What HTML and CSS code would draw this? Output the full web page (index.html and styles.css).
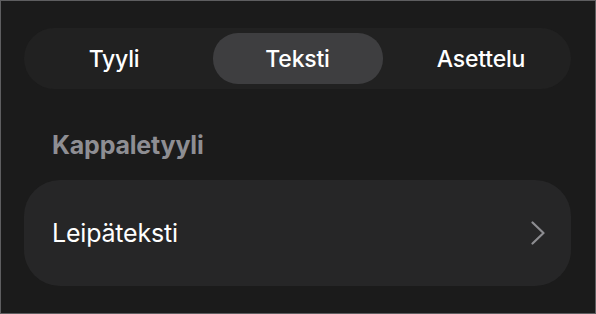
FILE: index.html
```html
<!DOCTYPE html>
<html lang="fi">
<head>
<meta charset="utf-8">
<title>Kappaletyyli</title>
<link rel="stylesheet" href="styles.css">
</head>
<body>
<div class="frame">
  <div class="segmented">
    <div class="seg">Tyyli</div>
    <div class="seg seg-active">Teksti</div>
    <div class="seg">Asettelu</div>
  </div>
  <div class="section-title">Kappaletyyli</div>
  <div class="card">
    <span class="card-label">Leipäteksti</span>
    <svg class="chevron" width="14" height="24" viewBox="0 0 14 24" aria-hidden="true">
      <path d="M1.5 1.5 L12.5 12 L1.5 22.5" fill="none" stroke="#8d8d91" stroke-width="2.2" stroke-linecap="round" stroke-linejoin="round"/>
    </svg>
  </div>
</div>
</body>
</html>
```
FILE: styles.css
```css
html, body {
  margin: 0;
  padding: 0;
  background: #1b1b1b;
}
.frame {
  width: 596px;
  height: 314px;
  box-sizing: border-box;
  border: 1px solid #5e5e60;
  padding: 27px 0 0 23px;
  font-family: Inter, "Noto Sans", "Liberation Sans", sans-serif;
  color: #ffffff;
}
.segmented {
  width: 547px;
  height: 61px;
  box-sizing: border-box;
  padding: 5px;
  border-radius: 31px;
  background: #212121;
  display: flex;
  justify-content: space-between;
}
.seg {
  width: 170px;
  display: flex;
  align-items: center;
  justify-content: center;
  font-size: 23px;
  font-weight: 500;
  letter-spacing: -0.2px;
  border-radius: 25px;
}
.seg-active {
  background: #3e3e40;
}
.section-title {
  margin: 43px 0 0 28px;
  height: 26px;
  line-height: 26px;
  font-size: 25px;
  font-weight: 700;
  color: #8e8e93;
  letter-spacing: -0.2px;
}
.card {
  margin-top: 22px;
  width: 547px;
  height: 106px;
  box-sizing: border-box;
  border-radius: 36px;
  background: #262627;
  display: flex;
  align-items: center;
  justify-content: space-between;
  padding: 0 26px 0 28px;
}
.card-label {
  font-size: 25px;
  font-weight: 400;
  letter-spacing: -0.2px;
}
.chevron {
  display: block;
}
```
